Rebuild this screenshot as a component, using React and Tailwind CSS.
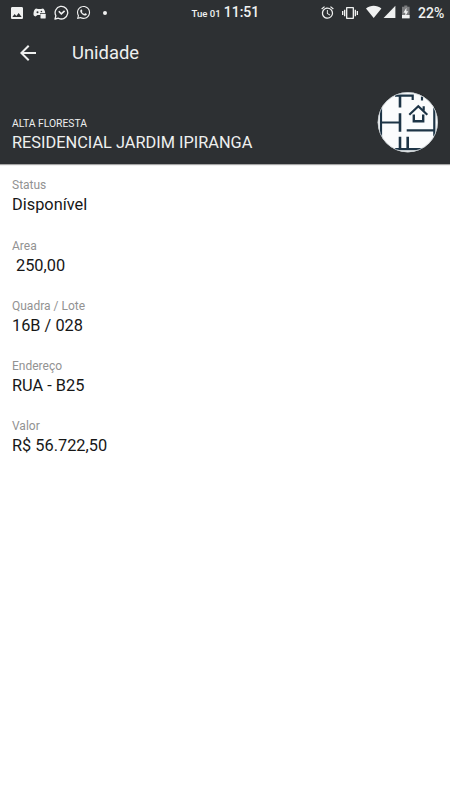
import { MdImage, MdAlarm, MdVibration, MdArrowBack } from "react-icons/md";
import { FaWhatsapp } from "react-icons/fa";

const fields = [
  { label: "Status", value: "Disponível" },
  { label: "Area", value: "250,00", indent: true },
  { label: "Quadra / Lote", value: "16B / 028" },
  { label: "Endereço", value: "RUA - B25" },
  { label: "Valor", value: "R$ 56.722,50" },
];

function GamepadIcon() {
  return (
    <svg className="ml-2 mt-px h-3 w-[13px]" viewBox="0 0 13 12" fill="currentColor">
      <path d="M3 1.500 5 2h3l2-.5c1.500 1 2 2.500 2.200 4.500H7.200v2H4.500L2.500 9.500C.8 9.300.3 8 .5 6.300.7 4 1.500 2.200 3 1.500Z" />
      <circle cx="4.500" cy="5.200" r="1" fill="#2d3033" />
      <circle cx="8.400" cy="4.500" r=".8" fill="#2d3033" />
      <rect x="7.500" y="6.800" width="5.200" height="4.700" rx=".4" />
    </svg>
  );
}

function ChatCheckIcon() {
  return (
    <svg className="ml-2 h-[15px] w-[15px]" viewBox="0 0 15 15" fill="none" stroke="currentColor" strokeWidth="1.300">
      <path d="M1 14 1.900 10.700A6.300 6.300 0 1 1 4.400 13.200Z" strokeLinejoin="round" />
      <path d="m4.800 6.300 2.500 2.600 3.300-3.100" strokeWidth="1.600" />
    </svg>
  );
}

// Wifi, signal and charging battery
function SignalIcons() {
  return (
    <svg className="ml-2 h-[15px] w-[45px]" viewBox="0 0 45 15" fill="currentColor">
      <path d="M0 3.600C4.500-.2 10.900-.2 15.400 3.600L7.700 13Z" />
      <path d="M29.400.8v12.200H17.600Z" />
      <path d="M38.300.4h3v1.300h2.300v11.600H36V1.700h2.300Z" opacity=".4" />
      <path d="M36 10h7.600v3.300H36Z" />
      <path d="m40.400 2.800-3 5h1.900v3.500l2.900-5h-1.800Z" />
    </svg>
  );
}

function StatusBar() {
  return (
    <div className="flex h-[25px] items-center text-[#f0f1f1]">
      <div className="flex w-[191.500px] items-center pl-[9px]">
        <MdImage className="h-4 w-4" />
        <GamepadIcon />
        <ChatCheckIcon />
        <FaWhatsapp className="ml-[7px] h-[15px] w-[15px]" />
        <span className="ml-3 h-1 w-1 rounded-full bg-current" />
      </div>
      <div className="flex w-[128.500px] items-baseline font-medium">
        <span className="text-[9.600px] leading-6">Tue 01</span>
        <span className="ml-[3px] text-[14px] leading-6">11:51</span>
      </div>
      <MdAlarm className="h-[15px] w-[15px]" />
      <MdVibration className="ml-[7px] h-4 w-4" />
      <SignalIcons />
      <span className="ml-[7px] text-[14px] font-medium leading-6">22%</span>
    </div>
  );
}

// Round badge with a floor plan and a house
function PlanBadge() {
  return (
    <svg className="h-[61px] w-[61px]" viewBox="0 0 61 61">
      <defs>
        <clipPath id="badge">
          <circle cx="30.800" cy="30.200" r="30" />
        </clipPath>
      </defs>
      <circle cx="30.800" cy="30.200" r="30" fill="#fbfcfd" />
      <g clipPath="url(#badge)" fill="none" stroke="#1d3446" strokeWidth="2.200">
        <path d="M4 16v29M4 30.500h19M57.300 16v28M29.700 38.300H57" />
        <path d="M18 3.700h17.700V8M45 4.500v4M18 57.200h29" />
        <path d="M23 3v12.500M23 21.300v18.400M23 44.700V57M30.700 44.700V57" strokeWidth="2.600" />
        <path d="m32.300 22.800 9-8.500 9 8.500M46.700 18.500v-4.200" strokeWidth="2.200" />
        <path d="M36.800 22.500v6.800h9.400v-6.800" strokeWidth="2.400" />
      </g>
      <circle cx="30.800" cy="30.200" r="29.700" fill="none" stroke="#c7cdd0" strokeWidth=".8" />
    </svg>
  );
}

function Field({ label, value, indent }) {
  return (
    <div className="h-[60.200px]">
      <div className="text-[12px] leading-4 text-[#929292]">{label}</div>
      <div className={`mt-px text-[16.350px] leading-[22px] text-[#171717] ${indent ? "pl-1" : ""}`}>{value}</div>
    </div>
  );
}

export default function App() {
  return (
    <div className="min-h-screen bg-white font-['Roboto',sans-serif]">
      <header className="h-[164px] bg-[#2d3033] shadow-[0_1px_1px_rgba(0,0,0,0.35)]">
        <StatusBar />
        <div className="flex h-14 items-center text-[#eeefef]">
          <MdArrowBack className="ml-4 h-6 w-6" />
          <h1 className="ml-8 text-[18.400px] leading-6">Unidade</h1>
        </div>
        <div className="flex justify-between pl-3 pr-3 pt-[11px] text-[#eeefef]">
          <div className="pt-[25px]">
            <div className="text-[10.350px] leading-[14px]">ALTA FLORESTA</div>
            <div className="mt-px text-[16.350px] leading-[22px]">RESIDENCIAL JARDIM IPIRANGA</div>
          </div>
          <PlanBadge />
        </div>
      </header>
      <main className="px-3 pt-[13.400px]">
        {fields.map((field) => (
          <Field key={field.label} {...field} />
        ))}
      </main>
    </div>
  );
}
